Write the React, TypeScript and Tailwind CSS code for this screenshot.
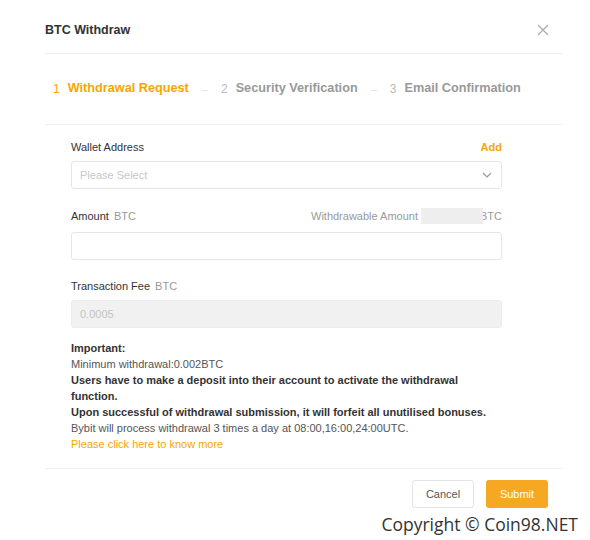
import React from 'react';

const Label: React.FC<{ title: string; unit?: string }> = ({ title, unit }) => (
  <span className="text-[11px] leading-[14px] text-[#333]">
    {title}
    {unit && <span className="ml-[5px] text-[#999]">{unit}</span>}
  </span>
);

const Step: React.FC<{ num: number; label: string; active?: boolean }> = ({ num, label, active }) => (
  <div className="flex items-center">
    <span className={`text-[12px] ${active ? 'text-[#f7a600]' : 'text-[#bbb]'}`}>{num}</span>
    <span className={`ml-[8px] text-[12.7px] font-bold ${active ? 'text-[#f7a600]' : 'text-[#999]'}`}>{label}</span>
  </div>
);

const Dash = () => <span className="mx-[13px] text-[11px] text-[#ddd]">–</span>;

export default function App() {
  return (
    <div className="w-[590px] h-[540px] bg-white font-['Liberation_Sans',Arial,sans-serif] overflow-hidden">
      <div className="ml-[45px] w-[517px]">
        {/* header */}
        <div className="flex items-center justify-between pt-[22px] pb-[15px] border-b border-[#eeeeee]">
          <h2 className="text-[12.5px] leading-4 font-bold text-[#333]">BTC Withdraw</h2>
          <svg width="12" height="12" viewBox="0 0 12 12" className="mr-[13px]">
            <path d="M1 1L11 11M11 1L1 11" stroke="#aaa" strokeWidth="1.2" />
          </svg>
        </div>

        {/* steps */}
        <div className="h-[71px] flex items-center pl-[8px] border-b border-[#eeeeee]">
          <Step num={1} label="Withdrawal Request" active />
          <Dash />
          <Step num={2} label="Security Verification" />
          <Dash />
          <Step num={3} label="Email Confirmation" />
        </div>

        {/* form */}
        <div className="ml-[26px] w-[431px] pt-[15px]">
          <div className="flex justify-between items-center">
            <Label title="Wallet Address" />
            <span className="text-[11px] leading-[14px] font-bold text-[#f7a600]">Add</span>
          </div>
          <div className="mt-[7px] h-[28px] rounded-[3px] border border-[#e6e6e6] flex items-center justify-between px-[8px]">
            <span className="text-[11px] text-[#c8c8c8]">Please Select</span>
            <svg width="10" height="6" viewBox="0 0 10 6" className="mr-[1px]">
              <path d="M1 1L5 5L9 1" stroke="#999" strokeWidth="1.2" fill="none" />
            </svg>
          </div>

          <div className="mt-[19px] flex justify-between items-center">
            <Label title="Amount" unit="BTC" />
            <div className="flex items-center text-[11px] leading-[14px] text-[#999]">
              <span>Withdrawable Amount</span>
              <span className="relative ml-[3px] mr-[-3px] w-[62px] h-[16px] bg-[#eeeeee]" />
              <span>BTC</span>
            </div>
          </div>
          <div className="mt-[8px] h-[28px] rounded-[3px] border border-[#e6e6e6]" />

          <div className="mt-[19px] flex items-center">
            <Label title="Transaction Fee" unit="BTC" />
          </div>
          <div className="mt-[7px] h-[28px] rounded-[3px] border border-[#ececec] bg-[#f1f1f1] flex items-center px-[8px]">
            <span className="text-[11px] text-[#c4c4c4]">0.0005</span>
          </div>

          <div className="mt-[12px] text-[11px] leading-[16px] text-[#555]">
            <p className="font-bold text-[#333]">Important:</p>
            <p>Minimum withdrawal:0.002BTC</p>
            <p className="font-bold text-[#333]">
              Users have to make a deposit into their account to activate the withdrawal function.
            </p>
            <p className="font-bold text-[#333]">
              Upon successful of withdrawal submission, it will forfeit all unutilised bonuses.
            </p>
            <p>Bybit will process withdrawal 3 times a day at 08:00,16:00,24:00UTC.</p>
            <p className="text-[#f7a600]">Please click here to know more</p>
          </div>
        </div>

        {/* footer */}
        <div className="mt-[16px] border-t border-[#eeeeee] pt-[11px] flex justify-end gap-[12px] pr-[14px]">
          <button className="w-[62px] h-[28px] rounded-[3px] border border-[#e3e3e3] bg-white text-[11px] text-[#555]">
            Cancel
          </button>
          <button className="w-[62px] h-[28px] rounded-[3px] bg-[#f7a823] text-[11px] text-white">
            Submit
          </button>
        </div>
      </div>
      <div className="flex justify-end pr-[12px] mt-[5px]">
        <span className="font-['Open_Sans',sans-serif] text-[17.5px] leading-[22px] text-[#333]">
          Copyright © Coin98.NET
        </span>
      </div>
    </div>
  );
}
